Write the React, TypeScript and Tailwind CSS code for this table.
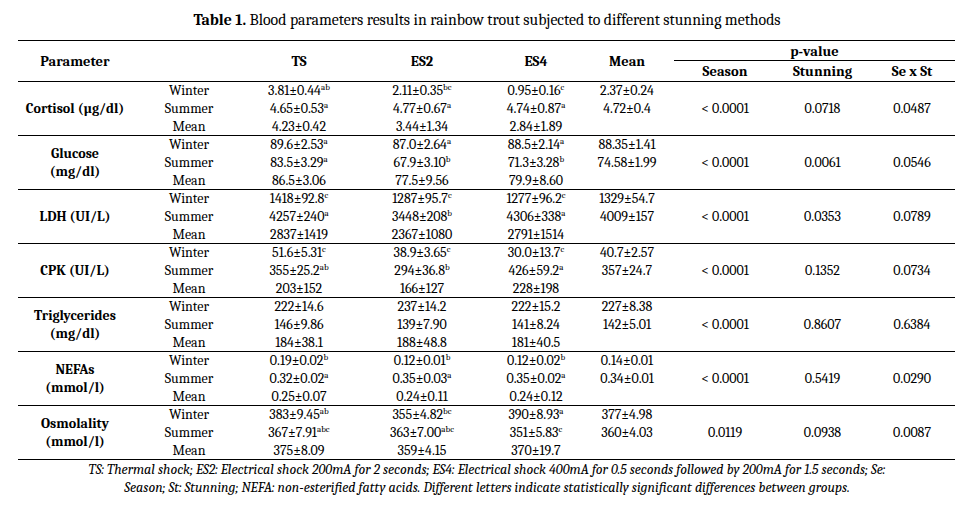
type Cell = [string, string?];

type Group = {
  name: string[];
  rows: [string, Cell, Cell, Cell, string][];
  p: [string, string, string];
};

const groups: Group[] = [
  {
    name: ["Cortisol (µg/dl)"],
    rows: [
      ["Winter", ["3.81±0.44", "ab"], ["2.11±0.35", "bc"], ["0.95±0.16", "c"], "2.37±0.24"],
      ["Summer", ["4.65±0.53", "a"], ["4.77±0.67", "a"], ["4.74±0.87", "a"], "4.72±0.4"],
      ["Mean", ["4.23±0.42"], ["3.44±1.34"], ["2.84±1.89"], ""],
    ],
    p: ["< 0.0001", "0.0718", "0.0487"],
  },
  {
    name: ["Glucose", "(mg/dl)"],
    rows: [
      ["Winter", ["89.6±2.53", "a"], ["87.0±2.64", "a"], ["88.5±2.14", "a"], "88.35±1.41"],
      ["Summer", ["83.5±3.29", "a"], ["67.9±3.10", "b"], ["71.3±3.28", "b"], "74.58±1.99"],
      ["Mean", ["86.5±3.06"], ["77.5±9.56"], ["79.9±8.60"], ""],
    ],
    p: ["< 0.0001", "0.0061", "0.0546"],
  },
  {
    name: ["LDH (UI/L)"],
    rows: [
      ["Winter", ["1418±92.8", "c"], ["1287±95.7", "c"], ["1277±96.2", "c"], "1329±54.7"],
      ["Summer", ["4257±240", "a"], ["3448±208", "b"], ["4306±338", "a"], "4009±157"],
      ["Mean", ["2837±1419"], ["2367±1080"], ["2791±1514"], ""],
    ],
    p: ["< 0.0001", "0.0353", "0.0789"],
  },
  {
    name: ["CPK (UI/L)"],
    rows: [
      ["Winter", ["51.6±5.31", "c"], ["38.9±3.65", "c"], ["30.0±13.7", "c"], "40.7±2.57"],
      ["Summer", ["355±25.2", "ab"], ["294±36.8", "b"], ["426±59.2", "a"], "357±24.7"],
      ["Mean", ["203±152"], ["166±127"], ["228±198"], ""],
    ],
    p: ["< 0.0001", "0.1352", "0.0734"],
  },
  {
    name: ["Triglycerides", "(mg/dl)"],
    rows: [
      ["Winter", ["222±14.6"], ["237±14.2"], ["222±15.2"], "227±8.38"],
      ["Summer", ["146±9.86"], ["139±7.90"], ["141±8.24"], "142±5.01"],
      ["Mean", ["184±38.1"], ["188±48.8"], ["181±40.5"], ""],
    ],
    p: ["< 0.0001", "0.8607", "0.6384"],
  },
  {
    name: ["NEFAs", "(mmol/l)"],
    rows: [
      ["Winter", ["0.19±0.02", "b"], ["0.12±0.01", "b"], ["0.12±0.02", "b"], "0.14±0.01"],
      ["Summer", ["0.32±0.02", "a"], ["0.35±0.03", "a"], ["0.35±0.02", "a"], "0.34±0.01"],
      ["Mean", ["0.25±0.07"], ["0.24±0.11"], ["0.24±0.12"], ""],
    ],
    p: ["< 0.0001", "0.5419", "0.0290"],
  },
  {
    name: ["Osmolality", "(mmol/l)"],
    rows: [
      ["Winter", ["383±9.45", "ab"], ["355±4.82", "bc"], ["390±8.93", "a"], "377±4.98"],
      ["Summer", ["367±7.91", "abc"], ["363±7.00", "abc"], ["351±5.83", "c"], "360±4.03"],
      ["Mean", ["375±8.09"], ["359±4.15"], ["370±19.7"], ""],
    ],
    p: ["0.0119", "0.0938", "0.0087"],
  },
];

function Value({ cell }: { cell: Cell }) {
  return (
    <>
      {cell[0]}
      {cell[1] && <sup className="font-serif text-[9px] -top-[5px]">{cell[1]}</sup>}
    </>
  );
}

export default function App() {
  return (
    <div className="w-[974px] h-[506px] bg-white text-black font-serif">
      {/* Caption */}
      <p className="pt-[10px] text-center text-[15.8px] leading-[20px] font-serif">
        <span className="font-bold font-serif">Table 1.</span>
        <span className="font-serif">
          {" "}Blood parameters results in rainbow trout subjected to different stunning methods
        </span>
      </p>

      <table className="ml-[18px] mt-[10px] w-[937px] table-fixed border-collapse text-[14px] leading-[17px] font-serif">
        <colgroup>
          <col className="w-[114px]" />
          <col className="w-[114px]" />
          <col className="w-[106px]" />
          <col className="w-[140px]" />
          <col className="w-[88px]" />
          <col className="w-[94px]" />
          <col className="w-[102px]" />
          <col className="w-[93px]" />
          <col className="w-[86px]" />
        </colgroup>

        <thead className="border-y border-black font-bold text-[14.5px] font-serif">
          <tr className="h-[19px]">
            <th rowSpan={2} className="p-0 text-center align-middle font-serif">Parameter</th>
            <th rowSpan={2} className="p-0" />
            <th rowSpan={2} className="p-0 text-center align-middle font-serif">TS</th>
            <th rowSpan={2} className="p-0 text-center align-middle font-serif">ES2</th>
            <th rowSpan={2} className="p-0 text-center align-middle font-serif">ES4</th>
            <th rowSpan={2} className="p-0 text-center align-middle font-serif">Mean</th>
            <th colSpan={3} className="p-0 pt-[2px] text-center border-b border-black font-serif">
              p-value
            </th>
          </tr>
          <tr className="h-[21px]">
            <th className="p-0 text-center font-serif">Season</th>
            <th className="p-0 text-center font-serif">Stunning</th>
            <th className="p-0 text-center font-serif">Se x St</th>
          </tr>
        </thead>

        {groups.map((g) => (
          <tbody key={g.name[0]} className="border-b border-black">
            {g.rows.map((r, i) => (
              <tr key={r[0]} className="h-[18px]">
                {i === 0 && (
                  <td rowSpan={3} className="p-0 text-center align-middle font-bold text-[14px] leading-[18px] font-serif">
                    {g.name.map((n) => (
                      <div key={n} className="font-serif">{n}</div>
                    ))}
                  </td>
                )}
                <td className="p-0 text-center font-serif">{r[0]}</td>
                <td className="p-0 text-center font-serif"><Value cell={r[1]} /></td>
                <td className="p-0 text-center font-serif"><Value cell={r[2]} /></td>
                <td className="p-0 text-center font-serif"><Value cell={r[3]} /></td>
                <td className="p-0 text-center font-serif">{r[4]}</td>
                {i === 0 &&
                  g.p.map((v, k) => (
                    <td key={k} rowSpan={3} className="p-0 text-center align-middle font-serif">
                      {v}
                    </td>
                  ))}
              </tr>
            ))}
          </tbody>
        ))}
      </table>

      {/* Footnote */}
      <p className="mt-px text-center italic text-[14px] leading-[18px] font-serif">
        <span className="block whitespace-nowrap font-serif">
          TS: Thermal shock; ES2: Electrical shock 200mA for 2 seconds; ES4: Electrical shock 400mA for 0.5
          seconds followed by 200mA for 1.5 seconds; Se:
        </span>
        <span className="block whitespace-nowrap font-serif">
          Season; St: Stunning; NEFA: non-esterified fatty acids. Different letters indicate statistically
          significant differences between groups.
        </span>
      </p>
    </div>
  );
}
